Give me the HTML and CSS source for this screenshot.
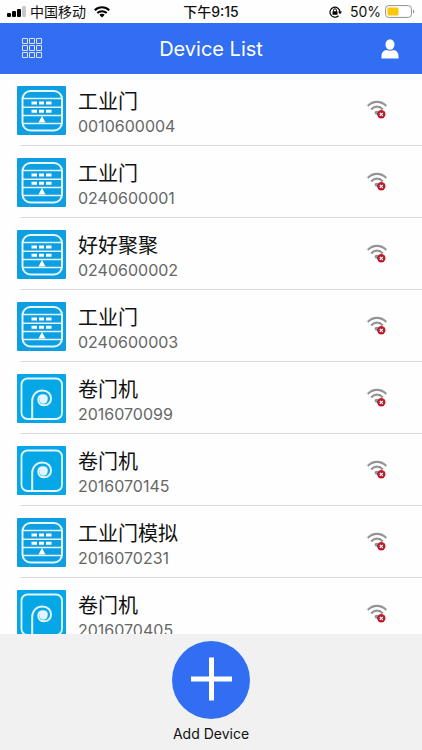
FILE: index.html
```html
<!DOCTYPE html>
<html lang="zh-CN">
<head>
<meta charset="utf-8">
<meta name="viewport" content="width=device-width, initial-scale=1">
<title>Device List</title>
<link rel="stylesheet" href="styles.css">
</head>
<body>
<svg class="sprite" aria-hidden="true">
  <symbol id="door" viewBox="0 0 49 49">
    <rect width="49" height="49" rx="1" fill="#0d9fe2"/>
    <g fill="none" stroke="#e4f6ff">
      <rect x="5.500" y="5" width="39.500" height="39.500" rx="8" stroke-width="2"/>
      <path d="M6 12.500h39M6 21.200h39M6 29.500h39M6 37.500h39" stroke-width="1.500"/>
      <path d="M14.500 17h5.500M22 17h5M29 17h5.500M14.500 25.300h5.500M22 25.300h5M29 25.300h5.500" stroke-width="3" stroke="#fff"/>
    </g>
    <path d="M25 30l3.500 6.500h-7z" fill="#fff"/>
  </symbol>
  <symbol id="roller" viewBox="0 0 49 49">
    <rect width="49" height="49" rx="1" fill="#05a7e6"/>
    <g fill="none" stroke="#e4f6ff">
      <rect x="4.500" y="4.500" width="40.500" height="40.500" rx="6" stroke-width="1.800"/>
      <path d="M15.200 44.500V27C15.200 20.500 19.800 16.600 25.500 16.600C31 16.600 34 20.500 34 24.500C34 28.800 30.800 31.300 27.200 31.300C23.600 31.300 21.300 28.800 21.300 25.800C21.300 23 23.300 21.200 26 21.200C28.300 21.200 29.800 22.700 29.800 24.600" stroke-width="2"/>
    </g>
    <circle cx="26.500" cy="25.500" r="4.200" fill="#e4f6ff"/>
  </symbol>
  <symbol id="offline" viewBox="0 0 20 20">
    <g fill="none" stroke="#929496" stroke-width="2.200">
      <path d="M.7 6C6 .6 14 .6 19.300 6"/>
      <path d="M4.200 9.400c3.300-3.600 8.300-3.600 11.600 0"/>
    </g>
    <circle cx="9.500" cy="12.700" r="1.900" fill="#929496"/>
    <circle cx="14.300" cy="14.300" r="4.200" fill="#b8202b"/>
    <path d="M12.800 12.800l3 3m0-3l-3 3" stroke="#fff" stroke-width="1.200"/>
  </symbol>
</svg>

<div class="status">
  <div class="status-side">
    <svg width="19" height="12" viewBox="0 0 19 12" aria-hidden="true">
      <rect x="0" y="7" width="4" height="4" rx="1"/>
      <rect x="5" y="5" width="4" height="6" rx="1"/>
      <rect x="10" y="3" width="4" height="8" rx="1"/>
      <rect x="15" y="0" width="4" height="11" rx="1" fill="#c8c8c8"/>
    </svg>
    <span>中国移动</span>
    <svg class="wifi" width="16" height="12" viewBox="0 0 16 12" aria-hidden="true">
      <path d="M.8 4.300c4-4 10.400-4 14.400 0M3.300 7c2.700-2.500 6.700-2.500 9.400 0" fill="none" stroke="#000" stroke-width="2"/>
      <path d="M8 11.500L5.300 8.800c1.500-1.300 3.900-1.300 5.400 0z"/>
    </svg>
  </div>
  <time class="clock">下午9:15</time>
  <div class="status-side status-end">
    <svg class="lock" width="13" height="12" viewBox="0 0 13 12" aria-hidden="true">
      <path d="M9.500 9.800A5 5 0 1 1 11 6" fill="none" stroke="#000" stroke-width="1.200"/>
      <path d="M9 5.500h4L11 8.300z"/>
      <rect x="3.500" y="5.200" width="5" height="3.600" rx=".5"/>
      <path d="M4.500 5.500V4.300a1.500 1.500 0 0 1 3 0v1.200" fill="none" stroke="#000"/>
    </svg>
    <span>50%</span>
    <svg width="30" height="13" viewBox="0 0 30 13" aria-hidden="true">
      <rect x=".6" y=".6" width="25.800" height="11.800" rx="3" fill="#fff" stroke="#919191"/>
      <rect x="2.500" y="2.500" width="11" height="8" rx="1" fill="#fcc60a"/>
      <path d="M28 4.500c1.700.7 1.700 3.300 0 4z" fill="#919191"/>
    </svg>
  </div>
</div>

<header class="bar">
  <button class="bar-button" type="button" aria-label="Menu">
    <svg width="21" height="21" viewBox="0 0 21 21" fill="none" stroke="#d8e4ff">
      <path d="M.5.500h5v5h-5zM7.500.500h5v5h-5zM14.500.500h5v5h-5zM.5 7.500h5v5h-5zM7.500 7.500h5v5h-5zM14.500 7.500h5v5h-5zM.5 14.500h5v5h-5zM7.500 14.500h5v5h-5zM14.500 14.500h5v5h-5z"/>
    </svg>
  </button>
  <h1>Device List</h1>
  <button class="bar-button" type="button" aria-label="Account">
    <svg width="18" height="20" viewBox="0 0 18 20" fill="#fff">
      <ellipse cx="9" cy="5.500" rx="4.500" ry="5.200"/>
      <path d="M.5 19.500v-2.500c0-3.500 2.200-5.600 5-6q3.500 1.400 7 0c2.800.4 5 2.500 5 6v2.500z"/>
    </svg>
  </button>
</header>

<main class="list">
  <ul>
    <li><svg class="thumb"><use href="#door"/></svg><div class="info"><h2>工业门</h2><p>0010600004</p></div><svg class="signal"><use href="#offline"/></svg></li>
    <li><svg class="thumb"><use href="#door"/></svg><div class="info"><h2>工业门</h2><p>0240600001</p></div><svg class="signal"><use href="#offline"/></svg></li>
    <li><svg class="thumb"><use href="#door"/></svg><div class="info"><h2>好好聚聚</h2><p>0240600002</p></div><svg class="signal"><use href="#offline"/></svg></li>
    <li><svg class="thumb"><use href="#door"/></svg><div class="info"><h2>工业门</h2><p>0240600003</p></div><svg class="signal"><use href="#offline"/></svg></li>
    <li><svg class="thumb"><use href="#roller"/></svg><div class="info"><h2>卷门机</h2><p>2016070099</p></div><svg class="signal"><use href="#offline"/></svg></li>
    <li><svg class="thumb"><use href="#roller"/></svg><div class="info"><h2>卷门机</h2><p>2016070145</p></div><svg class="signal"><use href="#offline"/></svg></li>
    <li><svg class="thumb"><use href="#door"/></svg><div class="info"><h2>工业门模拟</h2><p>2016070231</p></div><svg class="signal"><use href="#offline"/></svg></li>
    <li><svg class="thumb"><use href="#roller"/></svg><div class="info"><h2>卷门机</h2><p>2016070405</p></div><svg class="signal"><use href="#offline"/></svg></li>
  </ul>
</main>

<footer class="dock">
  <button class="add" type="button">
    <svg width="78" height="78" viewBox="0 0 78 78" aria-hidden="true">
      <circle cx="39" cy="39" r="39" fill="#316ef1"/>
      <path d="M39.500 16.500v43M19 38h41" stroke="#fff" stroke-width="5"/>
    </svg>
    <span>Add Device</span>
  </button>
</footer>
</body>
</html>
```

FILE: styles.css
```css
* {
  box-sizing: border-box;
  margin: 0;
  padding: 0;
}

body {
  display: flex;
  flex-direction: column;
  height: 100vh;
  background: #fefefe;
  color: #111;
  font-family: Inter, "Noto Sans CJK SC", sans-serif;
}

.sprite {
  position: absolute;
  width: 0;
  height: 0;
}

svg {
  display: block;
  flex: none;
}

button {
  border: 0;
  background: none;
  color: inherit;
  font: inherit;
  cursor: pointer;
}

.status {
  display: grid;
  grid-template-columns: 1fr auto 1fr;
  align-items: center;
  height: 23px;
  padding: 0 7px;
  font-size: 14px;
  line-height: 23px;
}

.status-side {
  display: flex;
  align-items: center;
  gap: 4px;
}

.status-end {
  justify-content: flex-end;
}

.wifi {
  margin-left: 4px;
}

.lock {
  margin-right: 4px;
}

.clock {
  font-weight: 500;
}

.bar {
  display: flex;
  align-items: center;
  justify-content: space-between;
  height: 51px;
  padding: 0 16px;
  background: #316ef1;
  color: #fff;
}

.bar-button {
  display: grid;
  place-items: center;
  width: 32px;
  height: 32px;
}

h1 {
  font-size: 20px;
  font-weight: 400;
}

.list {
  flex: 1;
  min-height: 0;
  overflow: hidden;
}

ul {
  list-style: none;
}

li {
  display: flex;
  align-items: center;
  gap: 12px;
  height: 72px;
  padding: 0 35px 0 17px;
  background: linear-gradient(#d9d9d9, #d9d9d9) 21px 100% / 100% 1px no-repeat;
}

.thumb {
  width: 49px;
  height: 49px;
}

.info {
  flex: 1;
  padding-top: 4px;
}

h2 {
  font-size: 20px;
  font-weight: 400;
  line-height: 28px;
}

.info p {
  color: #666;
  font-size: 16px;
  line-height: 20px;
}

.signal {
  width: 20px;
  height: 20px;
}

.dock {
  display: flex;
  justify-content: center;
  height: 116px;
  padding-top: 7px;
  background: #f1f1f1;
}

.add {
  display: flex;
  flex-direction: column;
  align-items: center;
  gap: 4px;
  font-size: 14px;
  line-height: 22px;
}
```
